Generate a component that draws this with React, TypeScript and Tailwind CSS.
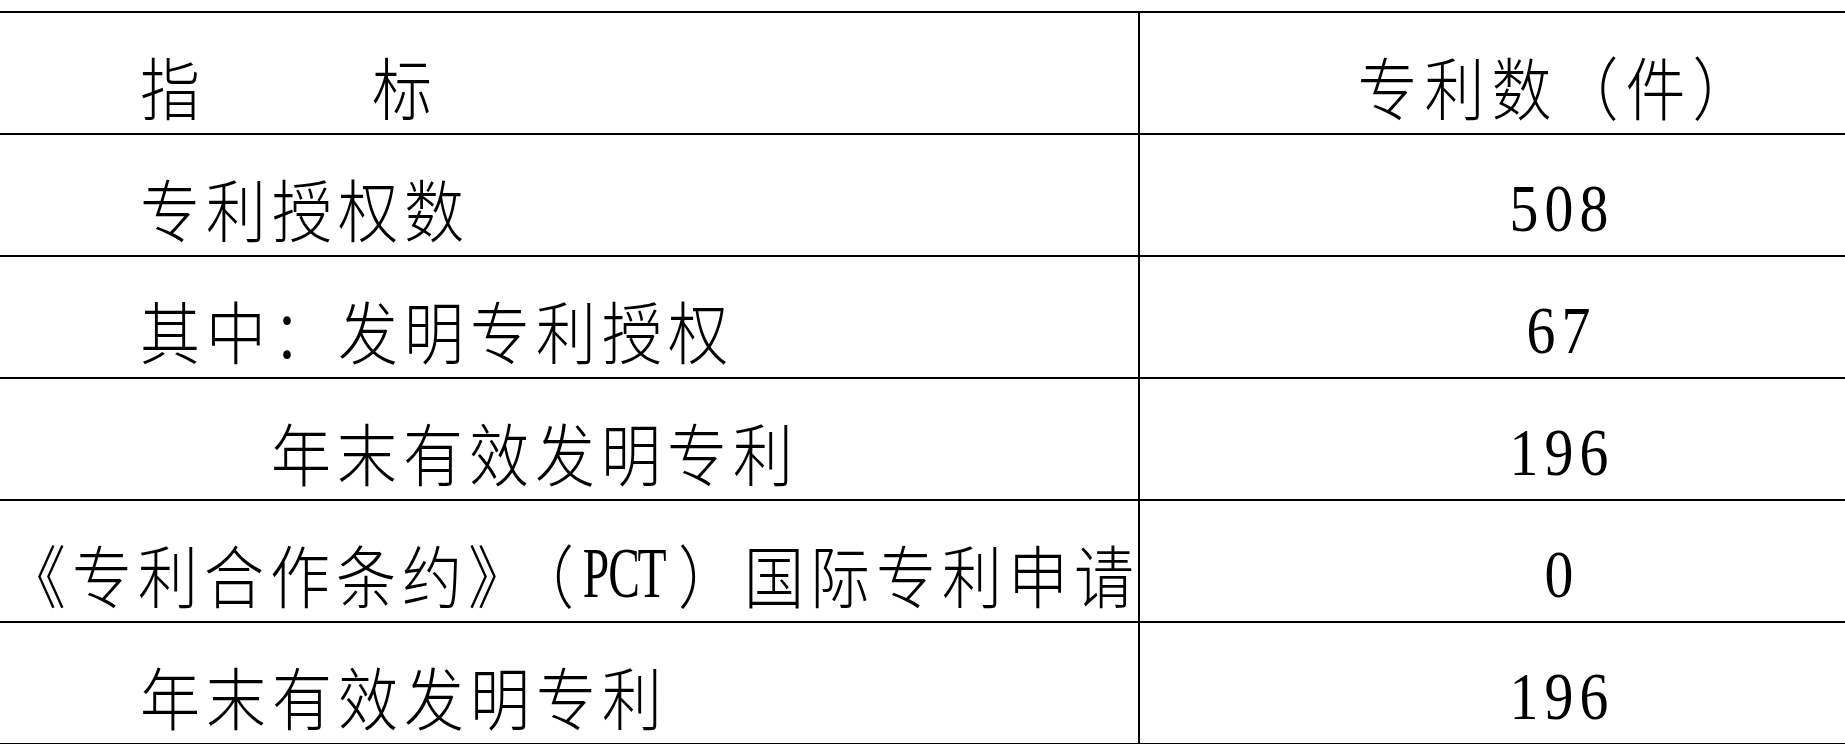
import React from "react";

const cjk = "font-['Noto_Sans_CJK_SC','Noto_Sans_CJK_TC',sans-serif]";
const latin = "font-['Liberation_Serif',serif]";

// tall, slightly condensed look of the 仿宋 glyphs in the source
function Han({
  children,
  track = "tracking-[6px]",
  className = "",
}: {
  children: React.ReactNode;
  track?: string;
  className?: string;
}) {
  return (
    <span className={`inline-block scale-y-[1.14] text-[60px] leading-none font-light whitespace-nowrap ${track} ${className}`}>
      {children}
    </span>
  );
}

function Digits({ value }: { value: string }) {
  return (
    <span className="flex">
      {value.split("").map((d, i) => (
        <span key={i} className="w-[35px] flex justify-center">
          <span className={`inline-block scale-x-[0.85] text-[68px] leading-none ${latin}`}>{d}</span>
        </span>
      ))}
    </span>
  );
}

function Pct() {
  return (
    <span className="flex items-center whitespace-nowrap">
      <Han>《专利合作条约</Han>
      <Han track="tracking-[-14px]">》</Han>
      <Han track="tracking-normal">（</Han>
      <span className="flex ml-[8px]">
        {"PCT".split("").map((c) => (
          <span key={c} className="w-[28px] flex justify-center">
            <span className={`inline-block scale-x-[0.66] text-[72px] leading-none ${latin}`}>{c}</span>
          </span>
        ))}
      </span>
      <Han className="ml-[12px]">）</Han>
      <Han>国际专利申请</Han>
    </span>
  );
}

type Row = { label: React.ReactNode; value: string; pad: string };

const rows: Row[] = [
  { label: <Han>专利授权数</Han>, value: "508", pad: "pl-[140px]" },
  { label: <Han>其中：发明专利授权</Han>, value: "67", pad: "pl-[140px]" },
  { label: <Han>年末有效发明专利</Han>, value: "196", pad: "pl-[271px]" },
  { label: <Pct />, value: "0", pad: "pl-[6px]" },
  { label: <Han>年末有效发明专利</Han>, value: "196", pad: "pl-[140px]" },
];

export default function App() {
  return (
    <main className={`w-[1845px] h-[744px] overflow-hidden bg-white text-black ${cjk}`}>
      <div className="mt-[11px] w-[1977px] border-t-2 border-black">
        <div className="grid grid-cols-[1140px_837px] h-[122px] border-b-2 border-black">
          <div className="border-r-2 border-black flex items-center pt-[24px] pl-[140px]">
            <Han track="tracking-normal">指</Han>
            <span className="w-[172px]"></span>
            <Han track="tracking-normal">标</Han>
          </div>
          <div className="flex items-center justify-center pt-[24px]">
            <Han track="tracking-[7px]">专利数（件）</Han>
          </div>
        </div>
        {rows.map((r, i) => (
          <div key={i} className="grid grid-cols-[1140px_837px] h-[122px] border-b-2 border-black">
            <div className={`border-r-2 border-black flex items-center pt-[24px] ${r.pad}`}>{r.label}</div>
            <div className="flex items-center justify-center pt-[26px]">
              <Digits value={r.value} />
            </div>
          </div>
        ))}
      </div>
    </main>
  );
}
